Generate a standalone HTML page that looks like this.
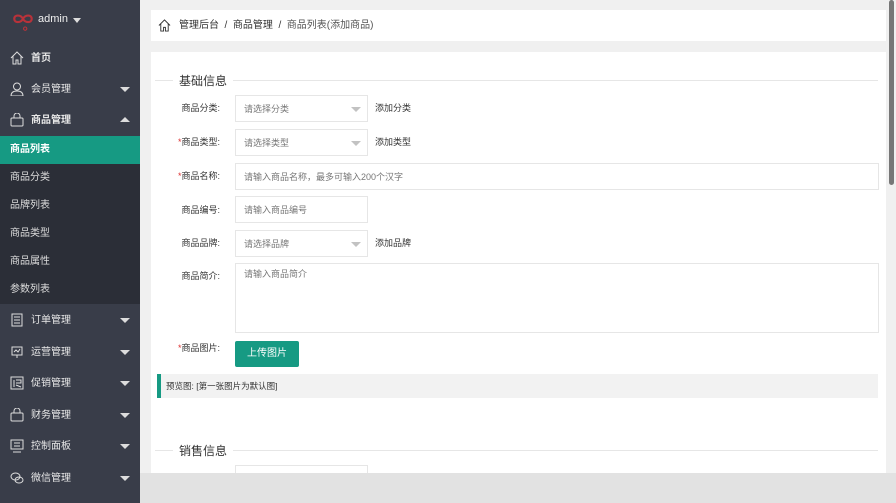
<!DOCTYPE html>
<html><head><meta charset="utf-8"><style>
*{margin:0;padding:0;box-sizing:border-box}
body{width:896px;height:503px;overflow:hidden;background:#f0f0f0;font-family:"Liberation Sans","Noto Sans CJK SC",sans-serif;font-size:9px;color:#333;position:relative}
.sb{position:absolute;left:0;top:0;width:140px;height:503px;background:#393d49}
.it{position:absolute;left:0;width:140px;height:31px;color:#e8e8e8;font-size:10px;line-height:31px;padding-left:31px}
.it svg{position:absolute;left:10px;top:8px}
.ar{position:absolute;right:10px;top:13px;width:0;height:0;border-left:5px solid transparent;border-right:5px solid transparent;border-top:5px solid #ddd}
.ar.up{border-top:none;border-bottom:5px solid #ddd;top:12px}
.sub{position:absolute;left:0;top:136px;width:140px;height:168px;background:#2b2e37}
.sub div{height:28px;line-height:28px;padding-left:10px;color:#ddd;font-size:10px}
.sub .on{background:#169a83;color:#fff;font-weight:bold}
.bc{position:absolute;left:151px;top:10px;width:735px;height:31px;background:#fff;line-height:31px;padding-left:28px;font-size:10px;color:#333}
.card{position:absolute;left:151px;top:52px;width:735px;height:451px;background:#fff}
.leg{position:absolute;height:1px;background:#e6e6e6;left:155px;width:723px}
.lt{position:absolute;background:#fff;padding:0 6px;font-size:12px;color:#333}
.lb{position:absolute;width:70px;left:150px;text-align:right;font-size:9px;color:#333}
.lb i{color:#d33;font-style:normal}
.in{position:absolute;left:235px;border:1px solid #e6e6e6;background:#fff;height:27px;display:flex;align-items:center;padding-left:8px;color:#777;font-size:9px}
.sel:after{content:"";position:absolute;right:6px;top:11px;border-left:5px solid transparent;border-right:5px solid transparent;border-top:5px solid #c2c2c2}
.add{position:absolute;left:375px;font-size:9px;color:#333}
</style></head><body>
<div class="sb">
 <div style="position:absolute;left:11px;top:9px">
  <svg width="24" height="24" viewBox="0 0 22 22" fill="none" stroke="#b8323a" stroke-width="2"><path d="M11 9c-2-4-8-4-8 0s6 4 8 0c2-4 8-4 8 0s-6 4-8 0"/><circle cx="13" cy="18" r="1.5" stroke-width="1"/></svg>
 </div>
 <div style="position:absolute;left:38px;top:13px;color:#eee;font-size:11px">admin</div>
 <div style="position:absolute;left:73px;top:18px;border-left:4px solid transparent;border-right:4px solid transparent;border-top:5px solid #ddd"></div>
 <div class="it" style="top:43px;font-weight:bold"><svg width="14" height="14" viewBox="0 0 14 14" fill="none" stroke="#ddd"><path d="M1 7L7 1l6 6M3 5v8h3V9h2v4h3V5"/></svg>首页</div>
 <div class="it" style="top:74px"><svg width="14" height="14" viewBox="0 0 14 14" fill="none" stroke="#ddd"><circle cx="7" cy="4.5" r="3.5"/><path d="M1 14c0-4 3-5 6-5s6 1 6 5z"/></svg>会员管理<span class="ar"></span></div>
 <div class="it" style="top:105px;font-weight:bold"><svg width="14" height="14" viewBox="0 0 14 14" fill="none" stroke="#ddd"><rect x="1" y="5" width="12" height="8" rx="1"/><path d="M4 5V3a3 3 0 016 0v2"/></svg>商品管理<span class="ar up"></span></div>
 <div class="sub"><div class="on">商品列表</div><div>商品分类</div><div>品牌列表</div><div>商品类型</div><div>商品属性</div><div>参数列表</div></div>
 <div class="it" style="top:305px"><svg width="14" height="14" viewBox="0 0 14 14" fill="none" stroke="#ddd"><rect x="2" y="1" width="10" height="12"/><path d="M4 4h6M4 7h6M4 10h6"/></svg>订单管理<span class="ar"></span></div>
 <div class="it" style="top:337px"><svg width="14" height="14" viewBox="0 0 14 14" fill="none" stroke="#ddd"><rect x="2" y="2" width="10" height="8"/><path d="M4 7l2-2 2 2 2-3M7 10v3"/></svg>运营管理<span class="ar"></span></div>
 <div class="it" style="top:368px"><svg width="14" height="14" viewBox="0 0 14 14" fill="none" stroke="#ddd"><rect x="1" y="1" width="12" height="12"/><path d="M4 4v7M6 4h5v3H6M6 9l5 2"/></svg>促销管理<span class="ar"></span></div>
 <div class="it" style="top:400px"><svg width="14" height="14" viewBox="0 0 14 14" fill="none" stroke="#ddd"><rect x="1" y="5" width="12" height="8" rx="1"/><path d="M4 5V3a3 3 0 016 0v2"/></svg>财务管理<span class="ar"></span></div>
 <div class="it" style="top:431px"><svg width="14" height="14" viewBox="0 0 14 14" fill="none" stroke="#ddd"><rect x="1" y="1" width="12" height="9"/><path d="M4 4h6M4 7h6M3 13h8"/></svg>控制面板<span class="ar"></span></div>
 <div class="it" style="top:463px"><svg width="14" height="14" viewBox="0 0 14 14" fill="none" stroke="#ddd"><ellipse cx="5.5" cy="5.5" rx="4.5" ry="3.5"/><ellipse cx="9" cy="9" rx="4" ry="3"/></svg>微信管理<span class="ar"></span></div>
</div>
<div class="bc"><svg style="position:absolute;left:7px;top:9px" width="13" height="13" viewBox="0 0 14 14" fill="none" stroke="#333"><path d="M1 7L7 1l6 6M3 5v8h3V9h2v4h3V5"/></svg>管理后台 &nbsp;/&nbsp; 商品管理 &nbsp;/&nbsp; <span style="color:#555">商品列表(添加商品)</span></div>
<div class="card"></div>
<div style="position:absolute;left:889px;top:0;width:5px;height:185px;background:#777;border-radius:3px"></div>
<div class="leg" style="top:80px"></div><div class="lt" style="left:173px;top:72px">基础信息</div>
<div class="lb" style="top:101px">商品分类:</div><div class="in sel" style="top:95px;width:133px">请选择分类</div><div class="add" style="top:101px">添加分类</div>
<div class="lb" style="top:135px"><i>*</i>商品类型:</div><div class="in sel" style="top:129px;width:133px">请选择类型</div><div class="add" style="top:135px">添加类型</div>
<div class="lb" style="top:169px"><i>*</i>商品名称:</div><div class="in" style="top:163px;width:644px">请输入商品名称，最多可输入200个汉字</div>
<div class="lb" style="top:203px">商品编号:</div><div class="in" style="top:196px;width:133px">请输入商品编号</div>
<div class="lb" style="top:236px">商品品牌:</div><div class="in sel" style="top:230px;width:133px">请选择品牌</div><div class="add" style="top:236px">添加品牌</div>
<div class="lb" style="top:269px">商品简介:</div><div class="in" style="top:263px;width:644px;height:70px;align-items:flex-start;padding-top:3px">请输入商品简介</div>
<div class="lb" style="top:341px"><i>*</i>商品图片:</div>
<div style="position:absolute;left:235px;top:341px;width:64px;height:26px;background:#169a83;color:#fff;font-size:10px;line-height:26px;text-align:center;border-radius:2px">上传图片</div>
<div style="position:absolute;left:157px;top:374px;width:721px;height:24px;background:#f2f2f2;border-left:4px solid #169a83;line-height:24px;padding-left:5px;font-size:8.5px">预览图: [第一张图片为默认图]</div>
<div class="leg" style="top:450px"></div><div class="lt" style="left:173px;top:442px">销售信息</div>
<div class="in" style="top:465px;width:133px"></div>
<div style="position:absolute;left:140px;top:473px;width:756px;height:30px;background:#e2e2e2"></div>
</body></html>
